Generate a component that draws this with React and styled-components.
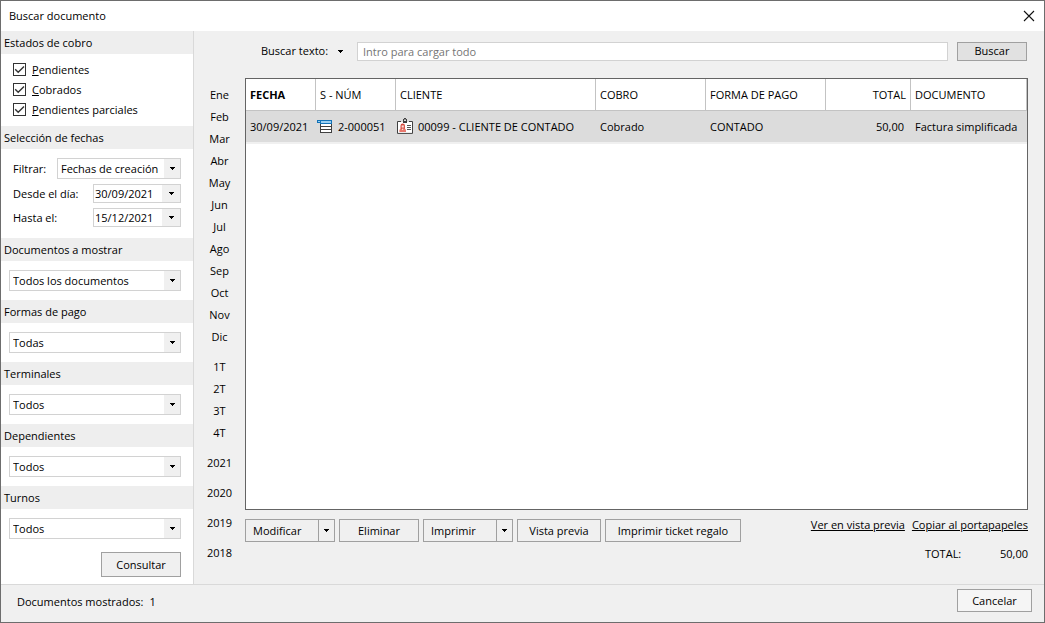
import React, { useState } from 'react';
import styled, { createGlobalStyle } from 'styled-components';

const GlobalStyle = createGlobalStyle`
  * { box-sizing: border-box; }

  body {
    margin: 0;
    background: #fff;
    color: #000;
    font-family: 'Open Sans', 'Noto Sans', sans-serif;
    font-size: 11px;
    line-height: 16px;
  }

  button, input, select {
    margin: 0;
    font: inherit;
    color: inherit;
  }
`;

const Dialog = styled.div`
  display: flex;
  flex-direction: column;
  min-height: 100vh;
  border: 1px solid #6d6d6d;
  background: #f0f0f0;
`;

const TitleBar = styled.header`
  display: flex;
  align-items: center;
  justify-content: space-between;
  height: 30px;
  padding: 0 9px 0 8px;
  background: #fff;
`;

const Title = styled.h1`
  margin: 0;
  font-size: 11px;
  font-weight: 400;
`;

const CloseButton = styled.button`
  display: flex;
  padding: 0;
  border: none;
  background: transparent;
  cursor: pointer;
`;

const Body = styled.div`
  flex: 1;
  display: flex;
`;

const Sidebar = styled.aside`
  flex: 0 0 193px;
  background: #fff;
  border-right: 1px solid #d9d9d9;
`;

const SectionTitle = styled.h2`
  margin: 0;
  height: 23px;
  padding: 0 3px;
  background: #eee;
  font-size: 11px;
  font-weight: 400;
  line-height: 24px;
`;

const Checks = styled.div`
  padding: 6px 12px;
`;

const CheckLabel = styled.label`
  display: flex;
  align-items: center;
  gap: 6px;
  height: 20px;
`;

const CheckText = styled.span`
  &::first-letter { text-decoration: underline; }
`;

const CheckBox = styled.span`
  display: grid;
  align-content: start;
  height: 14px;

  & > * { grid-area: 1 / 1; }
  svg { pointer-events: none; }
`;

const CheckInput = styled.input`
  appearance: none;
  width: 13px;
  height: 13px;
  border: 1px solid #333;
  background: #fff;

  &:not(:checked) + svg { visibility: hidden; }
`;

const DateFields = styled.div`
  display: flex;
  flex-direction: column;
  gap: 5px;
  padding: 9px 12px 11px;
`;

const FieldRow = styled.div`
  display: flex;
  align-items: center;
  justify-content: space-between;
`;

const FieldBox = styled.div`
  padding: 9px 12px 9px 8px;
`;

const SelectBox = styled.div`
  display: grid;
  width: ${({ $width }) => $width || '100%'};
  height: 21px;

  & > * { grid-area: 1 / 1; }
`;

const Select = styled.select`
  appearance: none;
  width: 100%;
  height: 100%;
  padding: 0 18px 0 3px;
  border: 1px solid #d2d2d2;
  border-radius: 0;
  background: #fff;
`;

const SelectArrow = styled.span`
  justify-self: end;
  display: flex;
  align-items: center;
  justify-content: center;
  width: 16px;
  margin: 1px;
  background: #f0f0f0;
  pointer-events: none;
`;

const DateBox = styled.div`
  display: flex;
  width: 88px;
  height: 19px;
  border: 1px solid #d2d2d2;
  background: #fff;
`;

const DateInput = styled.input`
  flex: 1;
  min-width: 0;
  padding: 0 1px;
  border: none;
  background: transparent;
`;

const DateButton = styled.button`
  display: flex;
  align-items: center;
  justify-content: center;
  width: 18px;
  padding: 0;
  border: none;
  background: #f0f0f0;
`;

const Actions = styled.div`
  display: flex;
  justify-content: flex-end;
  padding: 4px 12px 7px;
`;

const Button = styled.button`
  width: ${({ $width }) => $width};
  height: ${({ $height }) => $height || '23px'};
  padding: 0;
  border: 1px solid #a0a0a0;
  background: ${({ $background }) => $background || '#f0f0f0'};
  white-space: nowrap;
  cursor: pointer;
`;

const Periods = styled.nav`
  display: flex;
  flex-direction: column;
  flex: 0 0 51px;
  padding-top: 53px;
`;

const Period = styled.button`
  height: ${({ $tall }) => ($tall ? '30px' : '22px')};
  padding: 0;
  border: none;
  background: transparent;
  cursor: pointer;
`;

const PeriodGroup = styled.div`
  display: flex;
  flex-direction: column;
  margin-bottom: ${({ $gap }) => $gap || '0'};
`;

const Main = styled.main`
  flex: 1;
  min-width: 0;
  display: flex;
  flex-direction: column;
  padding: 10px 16px 0 0;
`;

const SearchRow = styled.div`
  display: flex;
  align-items: center;
  height: 20px;
  padding: 0 1px 0 16px;
`;

const SearchLabel = styled.label`
  width: 66px;
  white-space: nowrap;
`;

const ArrowButton = styled.button`
  display: flex;
  justify-content: center;
  width: 27px;
  padding: 0;
  border: none;
  background: transparent;
`;

const SearchInput = styled.input`
  flex: 1;
  min-width: 0;
  height: 19px;
  margin: 0 9px 0 3px;
  padding: 0 5px;
  border: 1px solid #d2d2d2;
  background: #fff;

  &::placeholder { color: #757575; opacity: 1; }
`;

const TablePanel = styled.div`
  flex: 1;
  margin-top: 17px;
  border: 1px solid #646464;
  background: #fff;
  overflow: hidden;
`;

const Table = styled.table`
  width: 100%;
  table-layout: fixed;
  border-collapse: separate;
  border-spacing: 0;
  border-bottom: 2px solid #f0f0f0;
  white-space: nowrap;
`;

const Th = styled.th`
  height: 32px;
  padding: 0 4px;
  border-right: 1px solid #c3c3c3;
  border-bottom: 1px solid #c3c3c3;
  font-weight: ${({ $sorted }) => ($sorted ? 700 : 400)};
  text-align: ${({ $right }) => ($right ? 'right' : 'left')};
`;

const Td = styled.td`
  height: 31px;
  padding: ${({ $icon }) => ($icon ? '0 1px' : '0 7px 0 4px')};
  background: #dcdcdc;
  text-align: ${({ $right }) => ($right ? 'right' : 'left')};
`;

const IconCell = styled.span`
  display: flex;
  align-items: center;
  gap: 5px;
`;

const Bottom = styled.div`
  display: flex;
  justify-content: space-between;
  height: 74px;
  padding-top: 9px;
`;

const Toolbar = styled.div`
  display: flex;
  gap: 4px;
`;

const Split = styled.div`
  display: flex;
  width: 90px;
  height: 23px;
  border: 1px solid #a0a0a0;
`;

const SplitMain = styled.button`
  flex: 1;
  padding: 0 7px;
  border: none;
  border-right: 1px solid #a0a0a0;
  background: transparent;
  text-align: left;
`;

const SplitArrow = styled.button`
  display: flex;
  align-items: center;
  justify-content: center;
  width: 15px;
  padding: 0;
  border: none;
  background: transparent;
`;

const Summary = styled.div`
  display: flex;
  flex-direction: column;
  align-items: flex-end;
  gap: 13px;
  margin-top: -2px;
`;

const Links = styled.div`
  display: flex;
  gap: 7px;
`;

const Link = styled.a`
  color: #000;
  text-decoration: underline;
  white-space: nowrap;
`;

const Total = styled.div`
  display: flex;
  justify-content: space-between;
  width: 103px;
`;

const Footer = styled.footer`
  display: flex;
  align-items: flex-start;
  justify-content: space-between;
  height: 38px;
  padding: 4px 12px 0 16px;
  border-top: 1px solid #d9d9d9;
`;

const Count = styled.span`
  display: flex;
  gap: 6px;
  padding-top: 5px;
`;

const Arrow = () => (
  <svg width="5" height="3" viewBox="0 0 5 3" shapeRendering="crispEdges" aria-hidden="true">
    <path d="M0 0h5v1h-1v1h-1v1h-1v-1h-1v-1h-1z" />
  </svg>
);

const CloseIcon = () => (
  <svg width="12" height="12" viewBox="0 0 12 12" fill="none" stroke="#111" strokeWidth="1.1" aria-hidden="true">
    <path d="M1 1l10 10M11 1L1 11" />
  </svg>
);

const CheckIcon = () => (
  <svg width="13" height="13" viewBox="0 0 13 13" fill="none" stroke="#333" strokeWidth="1.4" aria-hidden="true">
    <path d="M2.2 6.3l3 3 5.8-5.9" />
  </svg>
);

const TicketIcon = () => (
  <svg width="16" height="16" viewBox="0 0 16 16" shapeRendering="crispEdges" aria-hidden="true">
    <path fill="#fff" d="M3 5h12v9H3z" />
    <path fill="#404040" d="M3 5h1v9H3zM14 5h1v9h-1zM3 7h12v1H3zM3 10h12v1H3zM3 13h12v1H3z" />
    <path fill="#1272b8" d="M0 1h15v4H3V4H0z" />
    <path fill="#9bd0f2" d="M1 2h2v1H1zM4 2h10v2H4z" />
  </svg>
);

const CardIcon = () => (
  <svg width="16" height="17" viewBox="0 0 16 17" aria-hidden="true">
    <path fill="#fff" stroke="#404040" d="M.5 3.5h15v11.9H.5z" />
    <path fill="#dcdcdc" d="M4 3h8v1H4z" />
    <path fill="#404040" d="M6 1h1V0h2v1h1v4H6z" />
    <path fill="#dcdcdc" d="M7 1.5h2v1.5H7z" />
    <path fill="#d6483c" d="M3.5 11V7.8q0-2.3 2.2-2.3t2.2 2.3V11z" />
    <path fill="#fbe3df" d="M4.6 7.4h2.2v2.2H4.6z" />
    <path fill="#e9776c" d="M2.4 14v-1.6q0-1.9 3.3-1.9T9 12.4V14z" />
    <path fill="#fff" d="M4.8 10.7h1.8l-.9 1.6z" />
    <path stroke="#555" d="M10 7.5h4M10 9.5h4M10 11.5h4" />
  </svg>
);

const estados = ['Pendientes', 'Cobrados', 'Pendientes parciales'];

const filtros = [
  { titulo: 'Documentos a mostrar', valor: 'Todos los documentos' },
  { titulo: 'Formas de pago', valor: 'Todas' },
  { titulo: 'Terminales', valor: 'Todos' },
  { titulo: 'Dependientes', valor: 'Todos' },
  { titulo: 'Turnos', valor: 'Todos' },
];

const meses = ['Ene', 'Feb', 'Mar', 'Abr', 'May', 'Jun', 'Jul', 'Ago', 'Sep', 'Oct', 'Nov', 'Dic'];
const trimestres = ['1T', '2T', '3T', '4T'];
const anios = ['2021', '2020', '2019', '2018'];

const documentos = [
  {
    fecha: '30/09/2021',
    numero: '2-000051',
    cliente: '00099 - CLIENTE DE CONTADO',
    cobro: 'Cobrado',
    formaPago: 'CONTADO',
    total: '50,00',
    documento: 'Factura simplificada',
  },
];

const ComboBox = ({ value, width, ...props }) => (
  <SelectBox $width={width}>
    <Select defaultValue={value} {...props}>
      <option>{value}</option>
    </Select>
    <SelectArrow><Arrow /></SelectArrow>
  </SelectBox>
);

const DateField = ({ id, label, value }) => (
  <FieldRow>
    <label htmlFor={id}>{label}</label>
    <DateBox>
      <DateInput id={id} defaultValue={value} />
      <DateButton type="button" aria-label="Abrir calendario"><Arrow /></DateButton>
    </DateBox>
  </FieldRow>
);

const SplitButton = ({ children }) => (
  <Split>
    <SplitMain type="button">{children}</SplitMain>
    <SplitArrow type="button" aria-label={`Opciones de ${children}`}><Arrow /></SplitArrow>
  </Split>
);

const App = () => {
  const [texto, setTexto] = useState('');

  return (
    <>
      <GlobalStyle />
      <Dialog>
        <TitleBar>
          <Title>Buscar documento</Title>
          <CloseButton type="button" aria-label="Cerrar"><CloseIcon /></CloseButton>
        </TitleBar>

        <Body>
          <Sidebar>
            <SectionTitle>Estados de cobro</SectionTitle>
            <Checks>
              {estados.map((estado) => (
                <CheckLabel key={estado}>
                  <CheckBox>
                    <CheckInput type="checkbox" defaultChecked />
                    <CheckIcon />
                  </CheckBox>
                  <CheckText>{estado}</CheckText>
                </CheckLabel>
              ))}
            </Checks>

            <SectionTitle>Selección de fechas</SectionTitle>
            <DateFields>
              <FieldRow>
                <label htmlFor="filtrar">Filtrar:</label>
                <ComboBox id="filtrar" width="124px" value="Fechas de creación" />
              </FieldRow>
              <DateField id="desde" label="Desde el día:" value="30/09/2021" />
              <DateField id="hasta" label="Hasta el:" value="15/12/2021" />
            </DateFields>

            {filtros.map(({ titulo, valor }) => (
              <React.Fragment key={titulo}>
                <SectionTitle>{titulo}</SectionTitle>
                <FieldBox>
                  <ComboBox aria-label={titulo} value={valor} />
                </FieldBox>
              </React.Fragment>
            ))}
            <Actions>
              <Button type="button" $width="80px" $height="25px">Consultar</Button>
            </Actions>
          </Sidebar>

          <Periods>
            <PeriodGroup $gap="8px">
              {meses.map((mes) => <Period key={mes} type="button">{mes}</Period>)}
            </PeriodGroup>
            <PeriodGroup $gap="4px">
              {trimestres.map((t) => <Period key={t} type="button">{t}</Period>)}
            </PeriodGroup>
            <PeriodGroup>
              {anios.map((anio) => <Period key={anio} type="button" $tall>{anio}</Period>)}
            </PeriodGroup>
          </Periods>

          <Main>
            <SearchRow>
              <SearchLabel htmlFor="texto">Buscar texto:</SearchLabel>
              <ArrowButton type="button" aria-label="Opciones de búsqueda"><Arrow /></ArrowButton>
              <SearchInput
                id="texto"
                placeholder="Intro para cargar todo"
                value={texto}
                onChange={(e) => setTexto(e.target.value)}
              />
              <Button type="button" $width="70px" $height="19px" $background="#e1e1e1">Buscar</Button>
            </SearchRow>

            <TablePanel>
              <Table>
                <colgroup>
                  <col width="70" />
                  <col width="80" />
                  <col />
                  <col width="110" />
                  <col width="120" />
                  <col width="85" />
                  <col width="116" />
                </colgroup>
                <thead>
                  <tr>
                    <Th $sorted>FECHA</Th>
                    <Th>S - NÚM</Th>
                    <Th>CLIENTE</Th>
                    <Th>COBRO</Th>
                    <Th>FORMA DE PAGO</Th>
                    <Th $right>TOTAL</Th>
                    <Th>DOCUMENTO</Th>
                  </tr>
                </thead>
                <tbody>
                  {documentos.map((doc) => (
                    <tr key={doc.numero}>
                      <Td>{doc.fecha}</Td>
                      <Td $icon><IconCell><TicketIcon />{doc.numero}</IconCell></Td>
                      <Td $icon><IconCell><CardIcon />{doc.cliente}</IconCell></Td>
                      <Td>{doc.cobro}</Td>
                      <Td>{doc.formaPago}</Td>
                      <Td $right>{doc.total}</Td>
                      <Td>{doc.documento}</Td>
                    </tr>
                  ))}
                </tbody>
              </Table>
            </TablePanel>

            <Bottom>
              <Toolbar>
                <SplitButton>Modificar</SplitButton>
                <Button type="button" $width="80px">Eliminar</Button>
                <SplitButton>Imprimir</SplitButton>
                <Button type="button" $width="84px">Vista previa</Button>
                <Button type="button" $width="136px">Imprimir ticket regalo</Button>
              </Toolbar>
              <Summary>
                <Links>
                  <Link href="#vista">Ver en vista previa</Link>
                  <Link href="#copiar">Copiar al portapapeles</Link>
                </Links>
                <Total>
                  <span>TOTAL:</span>
                  <span>50,00</span>
                </Total>
              </Summary>
            </Bottom>
          </Main>
        </Body>

        <Footer>
          <Count>
            <span>Documentos mostrados:</span>
            <span>1</span>
          </Count>
          <Button type="button" $width="75px" $background="#f5f5f5">Cancelar</Button>
        </Footer>
      </Dialog>
    </>
  );
};

export default App;
